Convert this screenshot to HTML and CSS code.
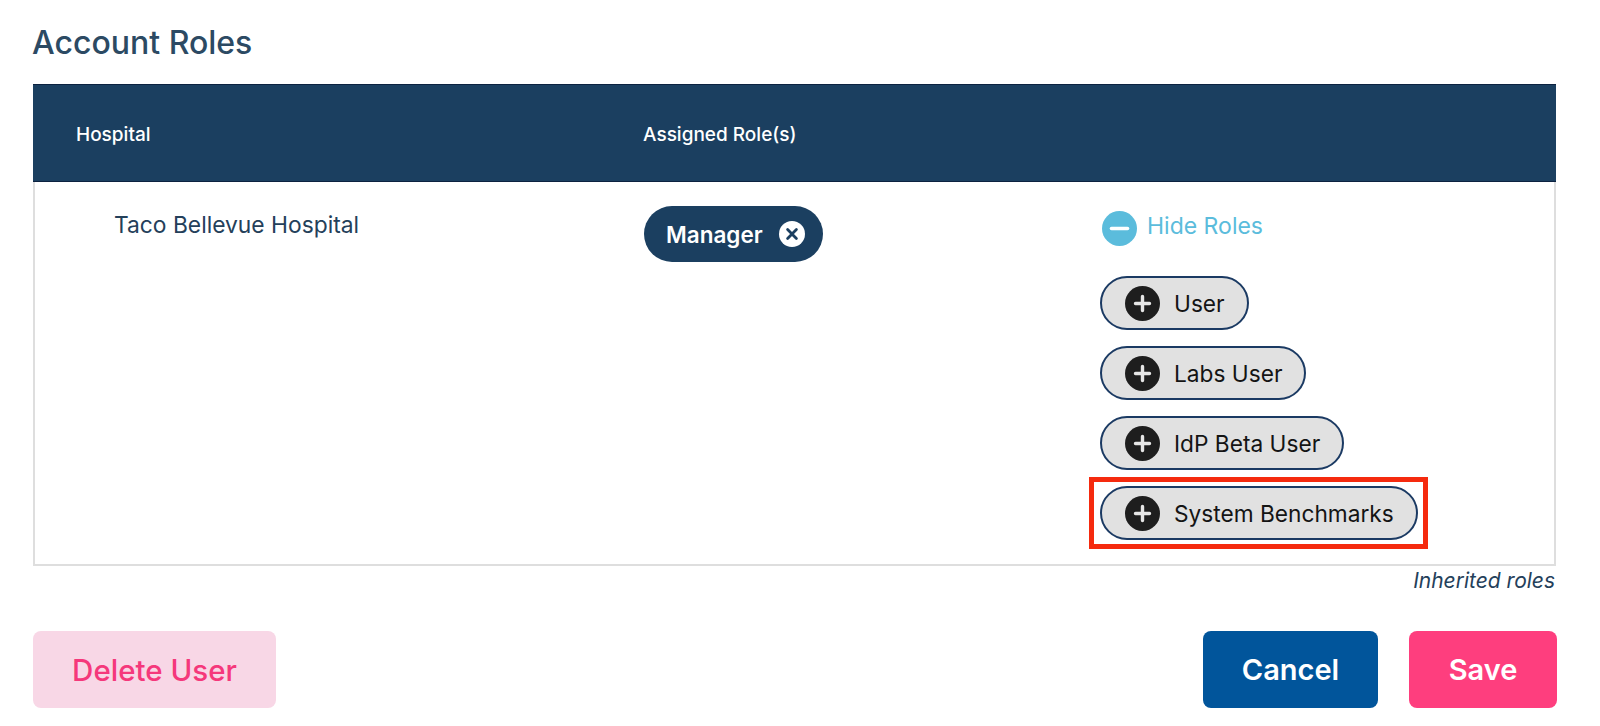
FILE: index.html
```html
<!DOCTYPE html>
<html lang="en">
<head>
  <meta charset="UTF-8" />
  <title>Account Roles</title>
  <link rel="stylesheet" href="styles.css">
</head>
<body>
  <div class="page">
    <h1>Account Roles</h1>

    <div class="roles-table">
      <div class="table-head">
        <div class="head-hospital">Hospital</div>
        <div class="head-roles">Assigned Role(s)</div>
      </div>
      <div class="table-row">
        <div class="hospital-name">Taco Bellevue Hospital</div>
        <div class="assigned">
          <span class="manager-pill">
            Manager
            <svg class="remove-icon" viewBox="0 0 26 26">
              <circle cx="13" cy="13" r="13" fill="#fff"/>
              <path d="M8.6 8.6l8.800 8.800M17.400 8.600l-8.800 8.800" stroke="#1b3f60" stroke-width="2.800" stroke-linecap="round"/>
            </svg>
          </span>
        </div>
        <div class="available">
          <div class="hide-roles">
            <svg class="toggle-icon" viewBox="0 0 35 35">
              <circle cx="17.500" cy="17.500" r="17.500" fill="#5bbcdc"/>
              <path d="M9.500 17.500h16" stroke="#fff" stroke-width="3.600" stroke-linecap="round"/>
            </svg>
            <span class="hide-label">Hide Roles</span>
          </div>
          <div class="role-list">
            <div class="role-pill">
              <svg class="add-icon" viewBox="0 0 35 35">
                <circle cx="17.500" cy="17.500" r="17.500" fill="#1e1e1e"/>
                <path d="M17.500 10.500v14M10.500 17.500h14" stroke="#e6e6e6" stroke-width="3.400" stroke-linecap="round"/>
              </svg>
              User
            </div>
            <div class="role-pill">
              <svg class="add-icon" viewBox="0 0 35 35">
                <circle cx="17.500" cy="17.500" r="17.500" fill="#1e1e1e"/>
                <path d="M17.500 10.500v14M10.500 17.500h14" stroke="#e6e6e6" stroke-width="3.400" stroke-linecap="round"/>
              </svg>
              Labs User
            </div>
            <div class="role-pill">
              <svg class="add-icon" viewBox="0 0 35 35">
                <circle cx="17.500" cy="17.500" r="17.500" fill="#1e1e1e"/>
                <path d="M17.500 10.500v14M10.500 17.500h14" stroke="#e6e6e6" stroke-width="3.400" stroke-linecap="round"/>
              </svg>
              IdP Beta User
            </div>
            <div class="role-pill highlighted">
              <svg class="add-icon" viewBox="0 0 35 35">
                <circle cx="17.500" cy="17.500" r="17.500" fill="#1e1e1e"/>
                <path d="M17.500 10.500v14M10.500 17.500h14" stroke="#e6e6e6" stroke-width="3.400" stroke-linecap="round"/>
              </svg>
              System Benchmarks
            </div>
          </div>
        </div>
      </div>
    </div>

    <div class="inherited">Inherited roles</div>

    <div class="actions">
      <button class="btn btn-delete">Delete User</button>
      <div class="actions-right">
        <button class="btn btn-cancel">Cancel</button>
        <button class="btn btn-save">Save</button>
      </div>
    </div>
  </div>
</body>
</html>
```

FILE: styles.css
```css
* {
  box-sizing: border-box;
  margin: 0;
  padding: 0;
  font-family: 'Inter', 'Lato', sans-serif;
}

body {
  background-color: #ffffff;
  color: #24405a;
}

.page {
  width: 1600px;
  height: 726px;
  padding: 24px 43px 0 32px;
  overflow: hidden;
}

h1 {
  font-size: 32px;
  font-weight: 500;
  line-height: 38px;
  color: #2c4a63;
  margin-bottom: 22px;
}

.roles-table {
  border-left: 2px solid #dedede;
  border-right: 2px solid #dedede;
  border-bottom: 2px solid #dedede;
  height: 482px;
  margin: 0 1px;
}

.table-head {
  display: grid;
  grid-template-columns: 567px 1fr;
  align-items: center;
  height: 98px;
  margin: 0 -2px;
  padding: 2px 0 0 43px;
  background-color: #1b3f60;
  border-top: 1px solid #0c2240;
  border-bottom: 1px solid #0c2240;
  color: #ffffff;
  font-size: 19px;
  font-weight: 500;
}

.table-row {
  display: grid;
  grid-template-columns: 609px 456px 1fr;
  padding: 24px 0 0 0;
}

.hospital-name {
  padding: 5px 0 0 79px;
  font-size: 22.800px;
  line-height: 28px;
  color: #24405a;
}

.manager-pill {
  display: inline-flex;
  align-items: center;
  gap: 16px;
  height: 56px;
  padding: 0 18px 0 22px;
  border-radius: 28px;
  background-color: #1b3f60;
  color: #ffffff;
  font-size: 22.500px;
  font-weight: 600;
}

.remove-icon {
  width: 26px;
  height: 26px;
}

.hide-roles {
  display: flex;
  align-items: center;
  gap: 10px;
  height: 35px;
  margin: 5px 0 0 2px;
  color: #5bbcdc;
  font-size: 23px;
}

.hide-label {
  margin-top: -5px;
}

.toggle-icon,
.add-icon {
  flex: none;
  width: 35px;
  height: 35px;
}

.role-list {
  display: flex;
  flex-direction: column;
  align-items: flex-start;
  gap: 16px;
  margin-top: 30px;
}

.role-pill {
  display: flex;
  align-items: center;
  gap: 14px;
  height: 54px;
  padding: 0 22px 0 23px;
  border: 2px solid #1b3a63;
  border-radius: 27px;
  background-color: #e1e1e1;
  color: #141414;
  font-size: 22.700px;
  font-weight: 400;
}

.highlighted {
  position: relative;
}

.highlighted::after {
  content: "";
  position: absolute;
  top: -11px;
  right: -12px;
  bottom: -11px;
  left: -13px;
  border: 5px solid #f52a0e;
}

.inherited {
  margin-top: 3px;
  padding-right: 2px;
  text-align: right;
  font-size: 21px;
  font-style: italic;
  line-height: 24px;
  color: #24405a;
}

.actions {
  display: flex;
  justify-content: space-between;
  margin: 38px 0 0 1px;
}

.actions-right {
  display: flex;
  gap: 31px;
}

.btn {
  height: 77px;
  border: none;
  border-radius: 8px;
  font-size: 29px;
  font-weight: 600;
  cursor: pointer;
}

.btn-delete {
  width: 243px;
  background-color: #f8d7e6;
  color: #f5387b;
  font-size: 29.500px;
  font-weight: 500;
}

.btn-cancel {
  width: 175px;
  background-color: #01559b;
  color: #ffffff;
}

.btn-save {
  width: 148px;
  background-color: #fe3e7e;
  color: #ffffff;
}
```
